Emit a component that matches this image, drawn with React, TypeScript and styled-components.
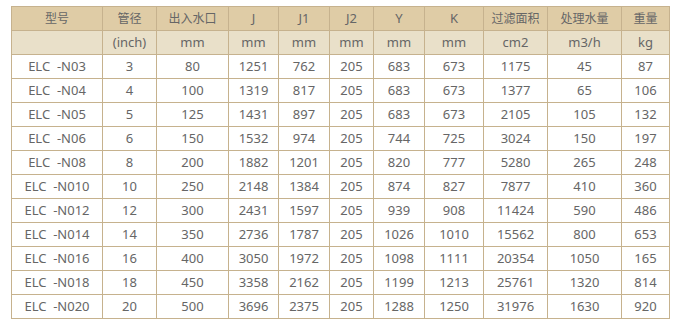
import React from "react";
import styled, { createGlobalStyle } from "styled-components";

const Global = createGlobalStyle`
  body {
    margin: 0;
    background: #ffffff;
    font-family: "Noto Sans", "Noto Sans CJK SC", sans-serif;
  }
`;

const Page = styled.div`
  padding: 6px 0 0 11px;
`;

const Table = styled.table`
  border-collapse: collapse;
  table-layout: fixed;
  width: 658px;
  font-size: 13px;
  color: #666666;
`;

const Cell = styled.td<{ $bg?: string; $cjk?: boolean; $pre?: boolean }>`
  border: 1px solid #c6b28e;
  height: 23px;
  padding: 0;
  text-align: center;
  vertical-align: middle;
  line-height: 23px;
  white-space: ${(p) => (p.$pre ? "pre" : "nowrap")};
  font-size: ${(p) => (p.$cjk ? "12px" : "13px")};
  background: ${(p) => p.$bg ?? "#ffffff"};
`;

const widths = [91, 54, 72, 50, 51, 44, 51, 59, 64, 74, 48];

const head = ["型号", "管径", "出入水口", "J", "J1", "J2", "Y", "K", "过滤面积", "处理水量", "重量"];
const units = ["", "(inch)", "mm", "mm", "mm", "mm", "mm", "mm", "cm2", "m3/h", "kg"];

const rows: (string | number)[][] = [
  ["ELC  -N03", 3, 80, 1251, 762, 205, 683, 673, 1175, 45, 87],
  ["ELC  -N04", 4, 100, 1319, 817, 205, 683, 673, 1377, 65, 106],
  ["ELC  -N05", 5, 125, 1431, 897, 205, 683, 673, 2105, 105, 132],
  ["ELC  -N06", 6, 150, 1532, 974, 205, 744, 725, 3024, 150, 197],
  ["ELC  -N08", 8, 200, 1882, 1201, 205, 820, 777, 5280, 265, 248],
  ["ELC  -N010", 10, 250, 2148, 1384, 205, 874, 827, 7877, 410, 360],
  ["ELC  -N012", 12, 300, 2431, 1597, 205, 939, 908, 11424, 590, 486],
  ["ELC  -N014", 14, 350, 2736, 1787, 205, 1026, 1010, 15562, 800, 653],
  ["ELC  -N016", 16, 400, 3050, 1972, 205, 1098, 1111, 20354, 1050, 165],
  ["ELC  -N018", 18, 450, 3358, 2162, 205, 1199, 1213, 25761, 1320, 814],
  ["ELC  -N020", 20, 500, 3696, 2375, 205, 1288, 1250, 31976, 1630, 920],
];

const isCjk = (s: string) => /[\u4e00-\u9fff]/.test(s);

export default function App() {
  return (
    <Page>
      <Global />
      <Table>
        <colgroup>
          {widths.map((w, i) => (
            <col key={i} style={{ width: w }} />
          ))}
        </colgroup>
        <tbody>
          <tr>
            {head.map((h, i) => (
              <Cell key={i} $bg="#dfcca6" $cjk={isCjk(h)}>
                {h}
              </Cell>
            ))}
          </tr>
          <tr>
            {units.map((u, i) => (
              <Cell key={i} $bg="#e9e0c9">
                {u}
              </Cell>
            ))}
          </tr>
          {rows.map((r, ri) => (
            <tr key={ri}>
              {r.map((v, ci) => (
                <Cell key={ci} $pre={ci === 0}>
                  {v}
                </Cell>
              ))}
            </tr>
          ))}
        </tbody>
      </Table>
    </Page>
  );
}
